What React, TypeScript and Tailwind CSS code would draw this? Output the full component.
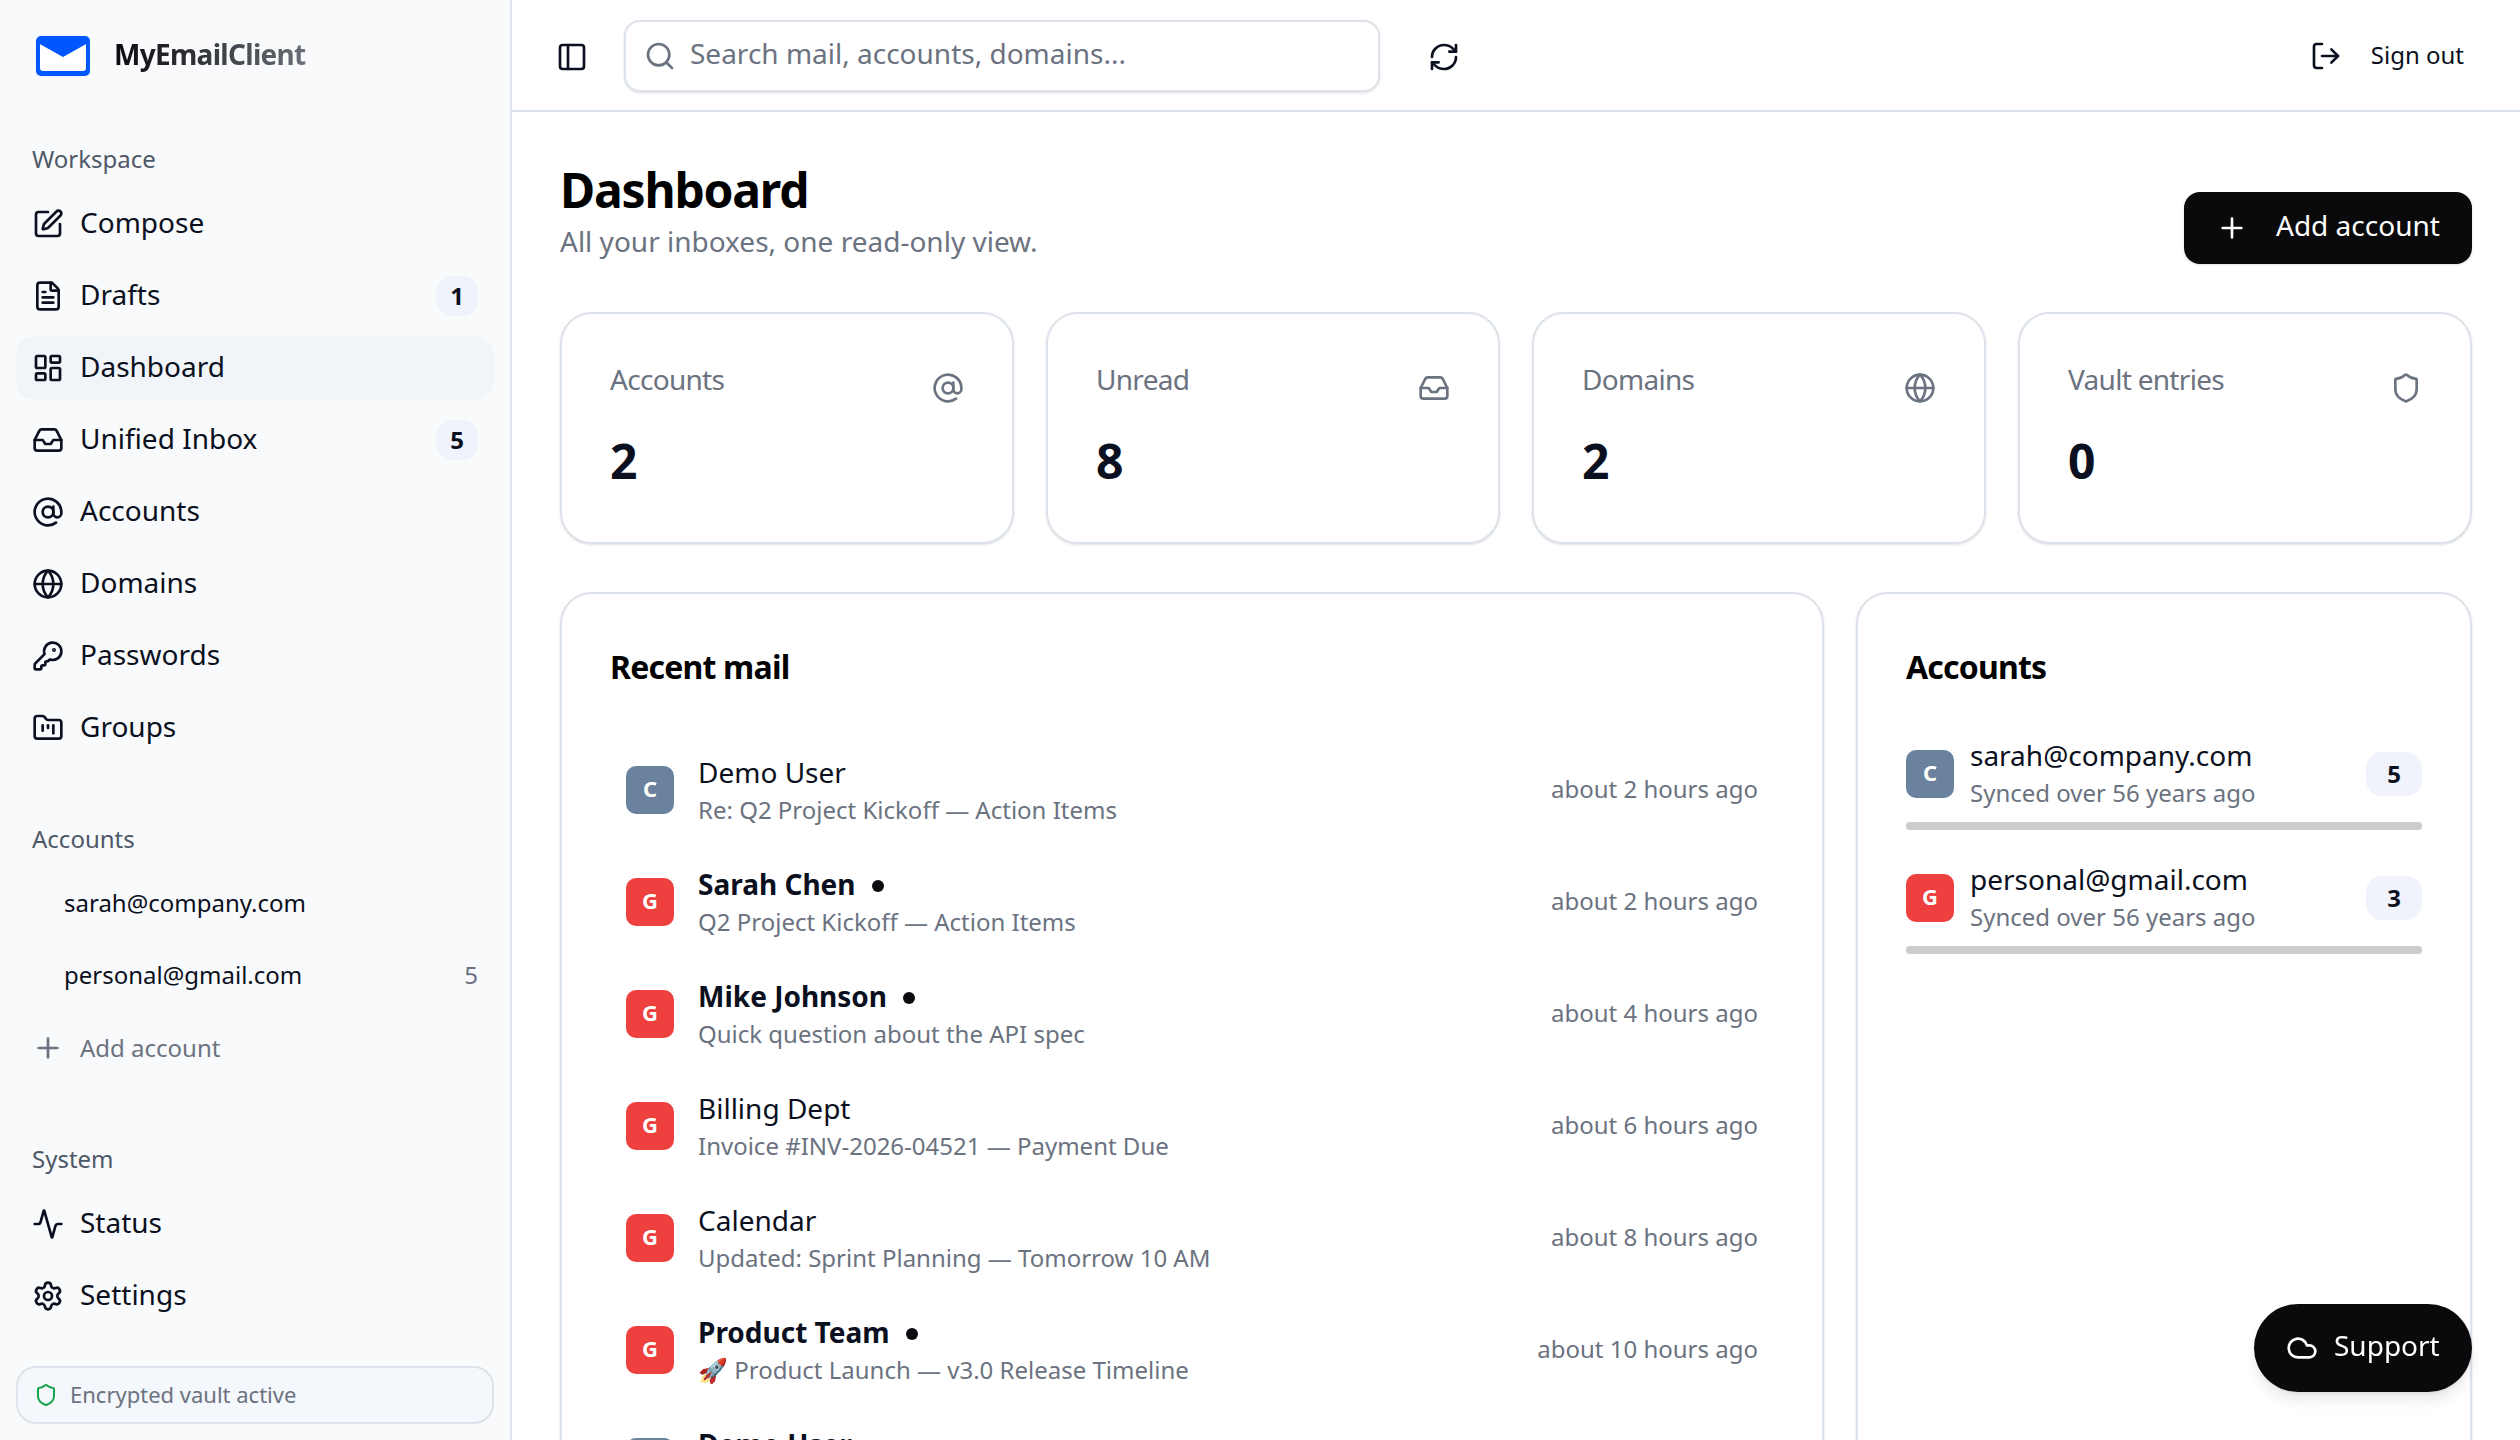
import {
  Activity,
  AtSign,
  Cloud,
  FileText,
  FolderKanban,
  Globe,
  Inbox,
  KeyRound,
  LayoutDashboard,
  LogOut,
  PanelLeft,
  Plus,
  RefreshCw,
  Search,
  Settings,
  Shield,
  SquarePen,
} from 'lucide-react';
import type { ComponentType } from 'react';

type Icon = ComponentType<{ className?: string }>;

const WORKSPACE: { label: string; icon: Icon; badge?: number; active?: boolean }[] = [
  { label: 'Compose', icon: SquarePen },
  { label: 'Drafts', icon: FileText, badge: 1 },
  { label: 'Dashboard', icon: LayoutDashboard, active: true },
  { label: 'Unified Inbox', icon: Inbox, badge: 5 },
  { label: 'Accounts', icon: AtSign },
  { label: 'Domains', icon: Globe },
  { label: 'Passwords', icon: KeyRound },
  { label: 'Groups', icon: FolderKanban },
];

const STATS: { label: string; value: number; icon: Icon }[] = [
  { label: 'Accounts', value: 2, icon: AtSign },
  { label: 'Unread', value: 8, icon: Inbox },
  { label: 'Domains', value: 2, icon: Globe },
  { label: 'Vault entries', value: 0, icon: Shield },
];

const MAIL = [
  { from: 'Demo User', subject: 'Re: Q2 Project Kickoff — Action Items', time: 'about 2 hours ago', provider: 'C', unread: false },
  { from: 'Sarah Chen', subject: 'Q2 Project Kickoff — Action Items', time: 'about 2 hours ago', provider: 'G', unread: true },
  { from: 'Mike Johnson', subject: 'Quick question about the API spec', time: 'about 4 hours ago', provider: 'G', unread: true },
  { from: 'Billing Dept', subject: 'Invoice #INV-2026-04521 — Payment Due', time: 'about 6 hours ago', provider: 'G', unread: false },
  { from: 'Calendar', subject: 'Updated: Sprint Planning — Tomorrow 10 AM', time: 'about 8 hours ago', provider: 'G', unread: false },
  { from: 'Product Team', subject: '🚀 Product Launch — v3.0 Release Timeline', time: 'about 10 hours ago', provider: 'G', unread: true },
  { from: 'Demo User', subject: 'Design review notes', time: 'about 12 hours ago', provider: 'C', unread: true },
];

const ACCOUNTS = [
  { email: 'sarah@company.com', provider: 'C', count: 5 },
  { email: 'personal@gmail.com', provider: 'G', count: 3 },
];

function ProviderTile({ provider }: { provider: string }) {
  return (
    <div
      className={`w-12 h-12 shrink-0 rounded-[10px] pb-1 flex items-center justify-center text-white text-[22px] font-bold ${
        provider === 'G' ? 'bg-[#ef4040]' : 'bg-[#6b829e]'
      }`}
    >
      {provider}
    </div>
  );
}

function NavRow({ label, icon: Icon, badge, active }: { label: string; icon: Icon; badge?: number; active?: boolean }) {
  return (
    <div className={`h-16 rounded-[20px] px-4 flex items-center gap-4 ${active ? 'bg-[#f1f5f9]' : ''}`}>
      <Icon className="w-8 h-8 shrink-0" />
      <span className="text-[28px] leading-10 flex-1 pb-[5px]">{label}</span>
      {badge !== undefined && (
        <span className="w-[42px] h-10 rounded-2xl bg-[#f0f3fb] flex items-center justify-center text-2xl font-bold">{badge}</span>
      )}
    </div>
  );
}

function SectionLabel({ children }: { children: string }) {
  return <div className="px-4 text-2xl leading-8 text-[#4f5866] mb-[17px]">{children}</div>;
}

function Sidebar() {
  return (
    <aside className="w-[512px] shrink-0 h-full bg-[#f9fafc] border-r-2 border-[#dde3ea] flex flex-col text-[#0b1020]">
      <div className="h-[112px] shrink-0 pl-9 pt-9 flex items-start gap-6">
        <svg viewBox="0 0 54 40" className="w-[54px] h-10 shrink-0">
          <rect width="54" height="40" rx="5" fill="#0057ff" />
          <rect x="4" y="4" width="46" height="31" rx="3" fill="#fff" />
          <path d="M2 2h50v5L27 21 2 7z" fill="#0057ff" />
        </svg>
        <span className="text-[28px] leading-9 tracking-tight font-bold bg-gradient-to-r from-[#0b0b10] to-[#6b7078] bg-clip-text text-transparent">
          MyEmailClient
        </span>
      </div>

      <nav className="px-4 pt-[31px] flex flex-col flex-1">
        <SectionLabel>Workspace</SectionLabel>
        <div className="flex flex-col gap-2">
          {WORKSPACE.map(item => (
            <NavRow key={item.label} {...item} />
          ))}
        </div>

        <div className="mt-[63px]">
          <SectionLabel>Accounts</SectionLabel>
        </div>
        <div className="flex flex-col gap-2">
          <div className="h-16 pl-12 pr-4 pb-[2px] flex items-center text-2xl">sarah@company.com</div>
          <div className="h-16 pl-12 pr-4 pb-[2px] flex items-center justify-between text-2xl">
            <span>personal@gmail.com</span>
            <span className="text-[#6b7280]">5</span>
          </div>
          <div className="h-16 px-4 flex items-center gap-4 text-[#6b7280]">
            <Plus className="w-8 h-8" />
            <span className="text-2xl">Add account</span>
          </div>
        </div>

        <div className="mt-[63px]">
          <SectionLabel>System</SectionLabel>
        </div>
        <div className="flex flex-col gap-2">
          <NavRow label="Status" icon={Activity} />
          <NavRow label="Settings" icon={Settings} />
        </div>

        <div className="mt-auto mb-4 h-[58px] rounded-[20px] border-2 border-[#dde3ea] bg-[#f4f7fb] px-4 flex items-center gap-3">
          <Shield className="w-6 h-6 text-[#16a34a]" />
          <span className="text-[22px] text-[#6b7280] pb-[2px]">Encrypted vault active</span>
        </div>
      </nav>
    </aside>
  );
}

function Header() {
  return (
    <header className="h-[112px] shrink-0 border-b-2 border-[#dde3ea] pl-7 pr-[56px] pt-[2px] flex items-center bg-white">
      <div className="w-16 h-16 flex items-center justify-center mr-5 pt-[1px]">
        <PanelLeft className="w-8 h-8" />
      </div>
      <div className="w-[756px] h-[72px] rounded-2xl border-2 border-[#dde3ea] shadow-sm bg-white pl-[18px] flex items-center gap-[14px]">
        <Search className="w-8 h-8 text-[#6b7280]" />
        <span className="text-[28px] text-[#6b7280] pb-[6px]">Search mail, accounts, domains...</span>
      </div>
      <div className="w-16 h-16 ml-8 pt-[1px] flex items-center justify-center">
        <RefreshCw className="w-8 h-8" />
      </div>
      <div className="ml-auto flex items-center gap-[29px]">
        <LogOut className="w-8 h-8" />
        <span className="text-2xl pb-[2px]">Sign out</span>
      </div>
    </header>
  );
}

function StatCard({ label, value, icon: Icon }: { label: string; value: number; icon: Icon }) {
  return (
    <div className="h-[232px] rounded-[32px] border-2 border-[#dde3ea] shadow-sm bg-white px-12 pt-[45px]">
      <div className="flex justify-between">
        <span className="text-[28px] leading-10 tracking-tight text-[#6b7280]">{label}</span>
        <Icon className="w-8 h-8 mt-[13px] text-[#6b7280]" />
      </div>
      <div className="text-[48px] leading-[56px] font-bold mt-[29px]">{value}</div>
    </div>
  );
}

function MailRow({ from, subject, time, provider, unread }: (typeof MAIL)[number]) {
  return (
    <div className="h-[96px] px-4 flex items-center gap-6">
      <ProviderTile provider={provider} />
      <div className="flex-1 min-w-0 pb-[2px]">
        <div className="flex items-center gap-4 h-10">
          <span className={`text-[28px] leading-10 ${unread ? 'font-bold' : ''}`}>{from}</span>
          {unread && <span className="w-3 h-3 mt-[3px] rounded-full bg-[#0b0b10]" />}
        </div>
        <div className="text-2xl leading-8 mt-[2px] text-[#6b7280] truncate">{subject}</div>
      </div>
      <span className="text-2xl text-[#6b7280] shrink-0 pb-[2px]">{time}</span>
    </div>
  );
}

export default function App() {
  return (
    <div className="h-screen w-full flex overflow-hidden bg-white text-[#0b1020] font-['Noto_Sans',sans-serif]">
      <Sidebar />
      <div className="flex-1 min-w-0 h-full flex flex-col">
        <Header />
        <main className="flex-1 min-h-0 overflow-hidden px-12 pt-[47px]">
          <div className="flex items-start justify-between h-[153px]">
            <div>
              <h1 className="text-[48px] leading-[62px] tracking-tight font-bold text-black">Dashboard</h1>
              <p className="text-[28px] leading-10 text-[#6b7280]">All your inboxes, one read-only view.</p>
            </div>
            <div className="w-[288px] h-[72px] mt-[33px] rounded-2xl bg-[#0a0a0c] shadow-sm text-white flex items-center gap-[28px] pl-[32px]">
              <Plus className="w-8 h-8" />
              <span className="text-[28px] pb-[6px]">Add account</span>
            </div>
          </div>

          <div className="grid grid-cols-4 gap-8">
            {STATS.map(s => (
              <StatCard key={s.label} {...s} />
            ))}
          </div>

          <div className="mt-[48px] grid grid-cols-[1fr_616px] gap-8 items-stretch">
            <section className="h-[1000px] rounded-[32px] border-2 border-[#dde3ea] shadow-sm bg-white px-12 pt-[49px]">
              <h2 className="text-[32px] leading-[48px] tracking-tight font-bold text-black mb-[51px]">Recent mail</h2>
              <div className="flex flex-col gap-4">
                {MAIL.map((m, i) => (
                  <MailRow key={i} {...m} />
                ))}
              </div>
            </section>

            <section className="h-[1000px] rounded-[32px] border-2 border-[#dde3ea] shadow-sm bg-white px-12 pt-[49px]">
              <h2 className="text-[32px] leading-[48px] tracking-tight font-bold text-black mb-[45px]">Accounts</h2>
              <div className="flex flex-col gap-[30px]">
                {ACCOUNTS.map(a => (
                  <div key={a.email}>
                    <div className="flex items-center gap-4 h-[76px]">
                      <ProviderTile provider={a.provider} />
                      <div className="flex-1 min-w-0 pb-[2px]">
                        <div className="text-[28px] leading-10">{a.email}</div>
                        <div className="text-2xl leading-9 text-[#6b7280]">Synced over 56 years ago</div>
                      </div>
                      <span className="w-14 h-11 rounded-2xl bg-[#f0f3fb] flex items-center justify-center text-2xl font-bold">{a.count}</span>
                    </div>
                    <div className="h-2 rounded-full bg-[#cccccc] mt-[10px]" />
                  </div>
                ))}
              </div>
            </section>
          </div>
        </main>
      </div>

      <div className="fixed right-12 bottom-12 h-[88px] w-[218px] rounded-full bg-[#0a0a0c] text-white shadow-lg flex items-center gap-4 pl-8">
        <Cloud className="w-8 h-8" />
        <span className="text-[28px] pb-[6px]">Support</span>
      </div>
    </div>
  );
}
